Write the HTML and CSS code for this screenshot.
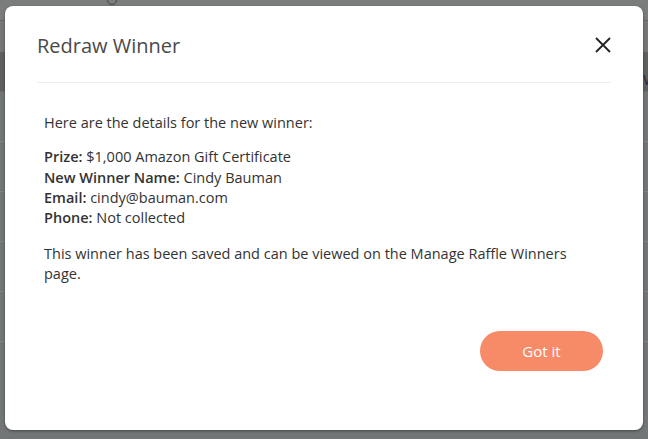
FILE: index.html
```html
<!DOCTYPE html>
<html lang="en">
<head>
    <meta charset="UTF-8">
    <meta name="viewport" content="width=device-width, initial-scale=1.0">
    <title>Redraw Winner</title>
    <link rel="stylesheet" href="styles.css">
</head>
<body>
    <div class="page">
        <div class="page-top"><span class="page-icon"></span></div>
        <div class="page-nav"></div>
        <div class="page-head"><span class="page-letter">W</span></div>
        <div class="page-row"></div>
        <div class="page-row"></div>
        <div class="page-row"></div>
        <div class="page-row"></div>
        <div class="page-row"></div>
    </div>

    <div class="modal">
        <div class="modal-header">
            <h2 class="modal-title">Redraw Winner</h2>
            <button class="modal-close" aria-label="Close">
                <svg width="18" height="18" viewBox="0 0 18 18">
                    <path d="M2 2 L16 16 M16 2 L2 16" stroke="#222" stroke-width="1.8" fill="none"/>
                </svg>
            </button>
        </div>
        <div class="modal-body">
            <p>Here are the details for the new winner:</p>
            <p>
                <strong>Prize:</strong> $1,000 Amazon Gift Certificate<br>
                <strong>New Winner Name:</strong> Cindy Bauman<br>
                <strong>Email:</strong> cindy@bauman.com<br>
                <strong>Phone:</strong> Not collected
            </p>
            <p>This winner has been saved and can be viewed on the Manage Raffle Winners page.</p>
        </div>
        <div class="modal-footer">
            <button class="boton-ok">Got it</button>
        </div>
    </div>
</body>
</html>
```

FILE: styles.css
```css
body {
    margin: 0;
    padding: 0;
    font-family: "Open Sans", "Noto Sans", sans-serif;
    background-color: #727676;
    overflow: hidden;
}

/* pagina detras del overlay */
.page {
    display: flex;
    flex-direction: column;
    height: 439px;
}

.page-top {
    height: 20px;
    background-color: #7b7c7c;
    border-bottom: 1px solid #666;
    position: relative;
}

.page-icon {
    position: absolute;
    left: 107px;
    top: -5px;
    width: 8px;
    height: 8px;
    border: 1.5px solid #444;
    border-radius: 50%;
}

.page-nav {
    height: 31px;
    background-color: #777;
}

.page-head {
    height: 39px;
    background-color: #5f6060;
    border-bottom: 1px solid #6a6a6a;
}

.page-letter {
    display: block;
    margin: 20px 0 0 643px;
    width: 5px;
    overflow: hidden;
    color: #2a2a40;
    font-size: 15px;
    line-height: 14px;
}

.page-row {
    height: 49px;
    border-bottom: 1px solid #828585;
}

.modal {
    position: absolute;
    left: 5px;
    top: 6px;
    width: 638px;
    height: 424px;
    background-color: #fff;
    border-radius: 8px;
    box-shadow: 0 1px 3px rgba(0, 0, 0, 0.4);
    display: flex;
    flex-direction: column;
}

.modal-header {
    display: flex;
    align-items: center;
    justify-content: space-between;
    height: 76px;
    margin: 0 32px;
    border-bottom: 1px solid #ececec;
}

.modal-title {
    margin: 0;
    font-weight: 400;
    font-size: 20px;
    color: #4a4a4a;
    letter-spacing: 0;
    position: relative;
    top: 1px;
}

.modal-close {
    background: none;
    border: none;
    padding: 0;
    margin-right: -1px;
    width: 18px;
    height: 18px;
    position: relative;
    top: 1px;
    cursor: pointer;
}

.modal-body {
    padding: 30px 44px 0 39px;
    font-size: 14.5px;
    line-height: 20.3px;
    color: #333;
}

.modal-body p {
    margin: 0 0 14px;
}

.modal-body p:nth-child(2) {
    margin-bottom: 15.5px;
}

.modal-body strong {
    font-weight: 600;
}

.modal-footer {
    display: flex;
    justify-content: flex-end;
    padding: 32px 40px 0;
}

.boton-ok {
    width: 123px;
    height: 40px;
    border: none;
    border-radius: 20px;
    background-color: #f78a67;
    color: #fff;
    font-family: "Open Sans", sans-serif;
    font-size: 15px;
    font-weight: 500;
    cursor: pointer;
}
```
